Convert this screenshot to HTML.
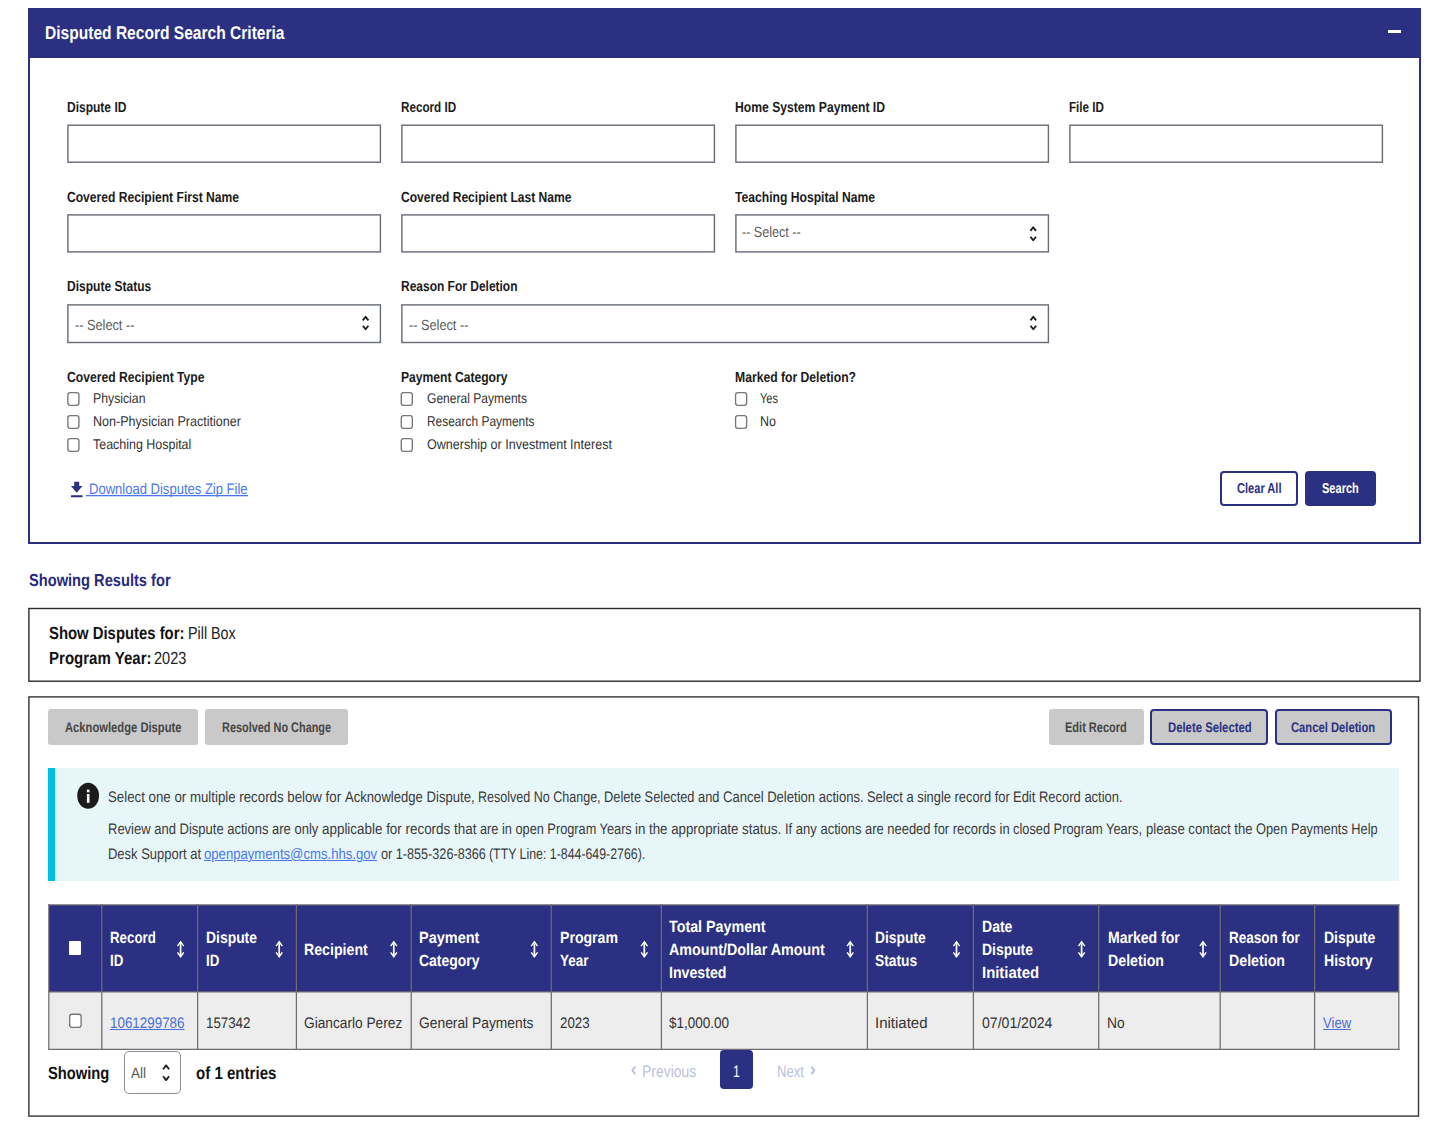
<!DOCTYPE html><html><head><meta charset="utf-8"><title>Disputed Record Search</title><style>
html,body{margin:0;padding:0;background:#fff}body{width:1449px;height:1131px;position:relative;overflow:hidden;font-family:"Liberation Sans", sans-serif}
#b div,#c div{position:absolute}
.t{position:absolute;white-space:nowrap;line-height:1;transform-origin:0 0;text-rendering:geometricPrecision}.t i{display:inline-block;width:0;height:0}
svg{position:absolute;left:0;top:0}
</style></head><body><div id="b">
<div style="left:28px;top:8px;width:1392.5px;height:535.5px;box-sizing:border-box;border:2px solid #2b3082;background:#fff"></div>
<div style="left:28px;top:8px;width:1392.5px;height:50px;background:#2b3082"></div>
<div style="left:1388.1px;top:29.9px;width:12.5px;height:3px;background:#fff"></div>
</div><svg width="1449" height="1131" viewBox="0 0 1449 1131">
<rect x="67.9" y="125.2" width="312.5" height="37" rx="0" fill="#fff" stroke="#656a73" stroke-width="1.4"/>
<rect x="401.9" y="125.2" width="312.5" height="37" rx="0" fill="#fff" stroke="#656a73" stroke-width="1.4"/>
<rect x="735.9" y="125.2" width="312.5" height="37" rx="0" fill="#fff" stroke="#656a73" stroke-width="1.4"/>
<rect x="1069.9" y="125.2" width="312.5" height="37" rx="0" fill="#fff" stroke="#656a73" stroke-width="1.4"/>
<rect x="67.9" y="214.9" width="312.5" height="37" rx="0" fill="#fff" stroke="#656a73" stroke-width="1.4"/>
<rect x="401.9" y="214.9" width="312.5" height="37" rx="0" fill="#fff" stroke="#656a73" stroke-width="1.4"/>
<rect x="735.9" y="214.9" width="312.5" height="37" rx="0" fill="#fff" stroke="#656a73" stroke-width="1.4"/>
<rect x="67.9" y="304.9" width="312.5" height="37.6" rx="0" fill="#fff" stroke="#656a73" stroke-width="1.4"/>
<rect x="401.9" y="304.9" width="646.5" height="37.6" rx="0" fill="#fff" stroke="#656a73" stroke-width="1.4"/>
<rect x="67.875" y="392.575" width="11.05" height="12.75" rx="2.3" fill="#fff" stroke="#777" stroke-width="1.35"/>
<rect x="67.875" y="415.575" width="11.05" height="12.75" rx="2.3" fill="#fff" stroke="#777" stroke-width="1.35"/>
<rect x="67.875" y="438.575" width="11.05" height="12.75" rx="2.3" fill="#fff" stroke="#777" stroke-width="1.35"/>
<rect x="401.275" y="392.575" width="11.05" height="12.75" rx="2.3" fill="#fff" stroke="#777" stroke-width="1.35"/>
<rect x="401.275" y="415.575" width="11.05" height="12.75" rx="2.3" fill="#fff" stroke="#777" stroke-width="1.35"/>
<rect x="401.275" y="438.575" width="11.05" height="12.75" rx="2.3" fill="#fff" stroke="#777" stroke-width="1.35"/>
<rect x="735.575" y="392.575" width="11.05" height="12.75" rx="2.3" fill="#fff" stroke="#777" stroke-width="1.35"/>
<rect x="735.575" y="415.575" width="11.05" height="12.75" rx="2.3" fill="#fff" stroke="#777" stroke-width="1.35"/>
<rect x="28.9" y="608.5" width="1391.1" height="72.7" rx="0" fill="#fff" stroke="#2a2a2a" stroke-width="1.4"/>
<rect x="28.9" y="696.9" width="1389.6" height="419.2" rx="0" fill="#fff" stroke="#333" stroke-width="1.4"/>
</svg><div id="c">
<div style="left:1220.4px;top:471px;width:77.8px;height:35.3px;box-sizing:border-box;border:2px solid #2b3082;border-radius:4px;background:#fff"></div>
<div style="left:1304.9px;top:471px;width:70.8px;height:35.3px;border-radius:4px;background:#2b3082"></div>
<div style="left:48.3px;top:708.8px;width:149.7px;height:36.2px;border-radius:3px;background:#c9c9c9"></div>
<div style="left:204.8px;top:708.8px;width:143px;height:36.2px;border-radius:3px;background:#c9c9c9"></div>
<div style="left:1048.8px;top:708.8px;width:95px;height:36.2px;border-radius:3px;background:#c9c9c9"></div>
<div style="left:1150.4px;top:708.8px;width:117.6px;height:36.2px;box-sizing:border-box;border:2px solid #2b3082;border-radius:4px;background:#c9c9c9"></div>
<div style="left:1274.6px;top:708.8px;width:117.6px;height:36.2px;box-sizing:border-box;border:2px solid #2b3082;border-radius:4px;background:#c9c9c9"></div>
<div style="left:48.3px;top:768px;width:1350.6px;height:113px;background:#e7f6f8"></div>
<div style="left:48.3px;top:768px;width:6.9px;height:113px;background:#00bde3"></div>
<div style="left:48.5px;top:904.8px;width:1350.3px;height:87px;background:#2b3082"></div>
<div style="left:48.5px;top:991.8px;width:1350.3px;height:57.7px;background:#ededed"></div>
<div style="left:69px;top:941px;width:12.4px;height:13.6px;background:#fff;border-radius:1px"></div>
<div style="left:124.3px;top:1050.7px;width:56.4px;height:43.3px;box-sizing:border-box;border:1px solid #8b9097;border-radius:5px;background:#fff"></div>
<div style="left:720.1px;top:1050px;width:33px;height:38.8px;border-radius:4px;background:#2b3082"></div>
</div><svg width="1449" height="1131" viewBox="0 0 1449 1131">
<line x1="48.2" y1="904.9" x2="1399.4" y2="904.9" stroke="#6c6c72" stroke-width="1.25"/>
<line x1="48.2" y1="991.9" x2="1399.4" y2="991.9" stroke="#6c6c72" stroke-width="1.25"/>
<line x1="48.2" y1="1049.3" x2="1399.4" y2="1049.3" stroke="#6c6c72" stroke-width="1.25"/>
<line x1="48.8" y1="904.3" x2="48.8" y2="1049.9" stroke="#6c6c72" stroke-width="1.25"/>
<line x1="101.8" y1="904.3" x2="101.8" y2="1049.9" stroke="#6c6c72" stroke-width="1.25"/>
<line x1="197.6" y1="904.3" x2="197.6" y2="1049.9" stroke="#6c6c72" stroke-width="1.25"/>
<line x1="296.4" y1="904.3" x2="296.4" y2="1049.9" stroke="#6c6c72" stroke-width="1.25"/>
<line x1="411.2" y1="904.3" x2="411.2" y2="1049.9" stroke="#6c6c72" stroke-width="1.25"/>
<line x1="551.3" y1="904.3" x2="551.3" y2="1049.9" stroke="#6c6c72" stroke-width="1.25"/>
<line x1="661.4" y1="904.3" x2="661.4" y2="1049.9" stroke="#6c6c72" stroke-width="1.25"/>
<line x1="867.4" y1="904.3" x2="867.4" y2="1049.9" stroke="#6c6c72" stroke-width="1.25"/>
<line x1="973.4" y1="904.3" x2="973.4" y2="1049.9" stroke="#6c6c72" stroke-width="1.25"/>
<line x1="1098.7" y1="904.3" x2="1098.7" y2="1049.9" stroke="#6c6c72" stroke-width="1.25"/>
<line x1="1220.2" y1="904.3" x2="1220.2" y2="1049.9" stroke="#6c6c72" stroke-width="1.25"/>
<line x1="1314.6" y1="904.3" x2="1314.6" y2="1049.9" stroke="#6c6c72" stroke-width="1.25"/>
<line x1="1398.8" y1="904.3" x2="1398.8" y2="1049.9" stroke="#6c6c72" stroke-width="1.25"/>
<rect x="69.675" y="1014.27" width="11.45" height="13.05" rx="2.3" fill="#fff" stroke="#777" stroke-width="1.35"/>
<path d="M1030.4 230.9 L1033.2 227.3 L1036 230.9 M1030.4 236.7 L1033.2 240.3 L1036 236.7" fill="none" stroke="#1b1b1b" stroke-width="1.8" stroke-linejoin="round"/>
<path d="M362.8 320.4 L365.6 316.8 L368.4 320.4 M362.8 325.7 L365.6 329.3 L368.4 325.7" fill="none" stroke="#1b1b1b" stroke-width="1.8" stroke-linejoin="round"/>
<path d="M1030.5 320.4 L1033.3 316.8 L1036.1 320.4 M1030.5 325.7 L1033.3 329.3 L1036.1 325.7" fill="none" stroke="#1b1b1b" stroke-width="1.8" stroke-linejoin="round"/>
<path d="M163.1 1069.2 L166.1 1065.4 L169.1 1069.2 M163.1 1076.3 L166.1 1080.1 L169.1 1076.3" fill="none" stroke="#1b1b1b" stroke-width="1.8" stroke-linejoin="round"/>
<path d="M74.2 481.8 h5 v4.3 h3.3 l-5.8 6.6 l-5.8 -6.6 h3.3z M71 495.2 h11.5 v2.1 h-11.5z" fill="#2b3082"/>
<rect x="86" y="495" width="162" height="1.3" fill="#4a77f0"/>
<ellipse cx="88.15" cy="795.8" rx="10.9" ry="13" fill="#1b1b1b"/>
<rect x="86.9" y="789.6" width="2.6" height="2.7" fill="#fff"/><rect x="86.9" y="794" width="2.6" height="8.8" fill="#fff"/>
<path d="M180.6 940.5 L184.3 945.7 L183.2 946.4 L180.6 943.1 L178 946.4 L176.9 945.7 Z M180.6 957.9 L184.3 952.7 L183.2 952 L180.6 955.3 L178 952 L176.9 952.7 Z" fill="#fff"/><rect x="179.75" y="942" width="1.7" height="14.4" fill="#fff"/>
<path d="M279.2 940.5 L282.9 945.7 L281.8 946.4 L279.2 943.1 L276.6 946.4 L275.5 945.7 Z M279.2 957.9 L282.9 952.7 L281.8 952 L279.2 955.3 L276.6 952 L275.5 952.7 Z" fill="#fff"/><rect x="278.35" y="942" width="1.7" height="14.4" fill="#fff"/>
<path d="M393.8 940.5 L397.5 945.7 L396.4 946.4 L393.8 943.1 L391.2 946.4 L390.1 945.7 Z M393.8 957.9 L397.5 952.7 L396.4 952 L393.8 955.3 L391.2 952 L390.1 952.7 Z" fill="#fff"/><rect x="392.95" y="942" width="1.7" height="14.4" fill="#fff"/>
<path d="M534.4 940.5 L538.1 945.7 L537 946.4 L534.4 943.1 L531.8 946.4 L530.7 945.7 Z M534.4 957.9 L538.1 952.7 L537 952 L534.4 955.3 L531.8 952 L530.7 952.7 Z" fill="#fff"/><rect x="533.55" y="942" width="1.7" height="14.4" fill="#fff"/>
<path d="M644.3 940.5 L648 945.7 L646.9 946.4 L644.3 943.1 L641.7 946.4 L640.6 945.7 Z M644.3 957.9 L648 952.7 L646.9 952 L644.3 955.3 L641.7 952 L640.6 952.7 Z" fill="#fff"/><rect x="643.45" y="942" width="1.7" height="14.4" fill="#fff"/>
<path d="M850.2 940.5 L853.9 945.7 L852.8 946.4 L850.2 943.1 L847.6 946.4 L846.5 945.7 Z M850.2 957.9 L853.9 952.7 L852.8 952 L850.2 955.3 L847.6 952 L846.5 952.7 Z" fill="#fff"/><rect x="849.35" y="942" width="1.7" height="14.4" fill="#fff"/>
<path d="M956.5 940.5 L960.2 945.7 L959.1 946.4 L956.5 943.1 L953.9 946.4 L952.8 945.7 Z M956.5 957.9 L960.2 952.7 L959.1 952 L956.5 955.3 L953.9 952 L952.8 952.7 Z" fill="#fff"/><rect x="955.65" y="942" width="1.7" height="14.4" fill="#fff"/>
<path d="M1081.6 940.5 L1085.3 945.7 L1084.2 946.4 L1081.6 943.1 L1079 946.4 L1077.9 945.7 Z M1081.6 957.9 L1085.3 952.7 L1084.2 952 L1081.6 955.3 L1079 952 L1077.9 952.7 Z" fill="#fff"/><rect x="1080.75" y="942" width="1.7" height="14.4" fill="#fff"/>
<path d="M1203 940.5 L1206.7 945.7 L1205.6 946.4 L1203 943.1 L1200.4 946.4 L1199.3 945.7 Z M1203 957.9 L1206.7 952.7 L1205.6 952 L1203 955.3 L1200.4 952 L1199.3 952.7 Z" fill="#fff"/><rect x="1202.15" y="942" width="1.7" height="14.4" fill="#fff"/>
<path d="M635.3 1066.5 L632.3 1070.3 L635.3 1074.1" fill="none" stroke="#bcbfdd" stroke-width="1.9"/>
<path d="M811.3 1066.5 L814.3 1070.3 L811.3 1074.1" fill="none" stroke="#bcbfdd" stroke-width="1.9"/>
</svg>
<span class="t" style="left:44.70px;top:23.60px;font-size:18.4px;font-weight:700;color:#fff;transform:scaleX(0.8460);">Disputed Record Search Criteria</span>
<span class="t" style="left:67.20px;top:101.30px;font-size:14.6px;font-weight:700;color:#1b1b1b;transform:scaleX(0.8230);">Dispute ID</span>
<span class="t" style="left:401.00px;top:101.30px;font-size:14.6px;font-weight:700;color:#1b1b1b;transform:scaleX(0.8007);">Record ID</span>
<span class="t" style="left:735.00px;top:101.30px;font-size:14.6px;font-weight:700;color:#1b1b1b;transform:scaleX(0.8330);">Home System Payment ID</span>
<span class="t" style="left:1069.00px;top:101.30px;font-size:14.6px;font-weight:700;color:#1b1b1b;transform:scaleX(0.7991);">File ID</span>
<span class="t" style="left:67.20px;top:191.30px;font-size:14.6px;font-weight:700;color:#1b1b1b;transform:scaleX(0.8284);">Covered Recipient First Name</span>
<span class="t" style="left:401.00px;top:191.30px;font-size:14.6px;font-weight:700;color:#1b1b1b;transform:scaleX(0.8276);">Covered Recipient Last Name</span>
<span class="t" style="left:735.00px;top:191.30px;font-size:14.6px;font-weight:700;color:#1b1b1b;transform:scaleX(0.8313);">Teaching Hospital Name</span>
<span class="t" style="left:67.20px;top:280.30px;font-size:14.6px;font-weight:700;color:#1b1b1b;transform:scaleX(0.8241);">Dispute Status</span>
<span class="t" style="left:401.00px;top:280.30px;font-size:14.6px;font-weight:700;color:#1b1b1b;transform:scaleX(0.8210);">Reason For Deletion</span>
<span class="t" style="left:67.20px;top:371.10px;font-size:14.6px;font-weight:700;color:#1b1b1b;transform:scaleX(0.8325);">Covered Recipient Type</span>
<span class="t" style="left:401.00px;top:371.10px;font-size:14.6px;font-weight:700;color:#1b1b1b;transform:scaleX(0.8310);">Payment Category</span>
<span class="t" style="left:735.00px;top:371.10px;font-size:14.6px;font-weight:700;color:#1b1b1b;transform:scaleX(0.8336);">Marked for Deletion?</span>
<span class="t" style="left:742.30px;top:225.90px;font-size:14.8px;font-weight:400;color:#5c5c5c;transform:scaleX(0.8485);">-- Select --</span>
<span class="t" style="left:74.50px;top:319.20px;font-size:14.8px;font-weight:400;color:#5c5c5c;transform:scaleX(0.8601);">-- Select --</span>
<span class="t" style="left:408.50px;top:319.20px;font-size:14.8px;font-weight:400;color:#5c5c5c;transform:scaleX(0.8601);">-- Select --</span>
<span class="t" style="left:93.00px;top:390.90px;font-size:14.1px;font-weight:400;color:#333;transform:scaleX(0.8702);">Physician</span>
<span class="t" style="left:93.00px;top:413.90px;font-size:14.1px;font-weight:400;color:#333;transform:scaleX(0.8911);">Non-Physician Practitioner</span>
<span class="t" style="left:93.00px;top:436.90px;font-size:14.1px;font-weight:400;color:#333;transform:scaleX(0.8836);">Teaching Hospital</span>
<span class="t" style="left:426.50px;top:390.90px;font-size:14.1px;font-weight:400;color:#333;transform:scaleX(0.8566);">General Payments</span>
<span class="t" style="left:426.50px;top:413.90px;font-size:14.1px;font-weight:400;color:#333;transform:scaleX(0.8471);">Research Payments</span>
<span class="t" style="left:426.50px;top:436.90px;font-size:14.1px;font-weight:400;color:#333;transform:scaleX(0.8912);">Ownership or Investment Interest</span>
<span class="t" style="left:760.00px;top:390.90px;font-size:14.1px;font-weight:400;color:#333;transform:scaleX(0.7826);">Yes</span>
<span class="t" style="left:760.00px;top:413.90px;font-size:14.1px;font-weight:400;color:#333;transform:scaleX(0.8873);">No</span>
<span class="t" style="left:89.40px;top:482.20px;font-size:15.3px;font-weight:400;color:#4a77f0;transform:scaleX(0.8518);">Download Disputes Zip File</span>
<span class="t" style="left:1237.00px;top:482.40px;font-size:14.4px;font-weight:700;color:#2b3082;transform:scaleX(0.7691);">Clear All</span>
<span class="t" style="left:1321.90px;top:482.40px;font-size:14.4px;font-weight:700;color:#fff;transform:scaleX(0.7667);">Search</span>
<span class="t" style="left:29.00px;top:572.20px;font-size:17.4px;font-weight:700;color:#252a80;transform:scaleX(0.8422);">Showing Results for</span>
<span class="t" style="left:48.50px;top:625.20px;font-size:17.6px;font-weight:700;color:#111;transform:scaleX(0.8446);">Show Disputes for:</span>
<span class="t" style="left:188.30px;top:625.20px;font-size:17.6px;font-weight:400;color:#222;transform:scaleX(0.8130);">Pill Box</span>
<span class="t" style="left:48.50px;top:650.30px;font-size:17.6px;font-weight:700;color:#111;transform:scaleX(0.8544);">Program Year:</span>
<span class="t" style="left:154.00px;top:650.30px;font-size:17.6px;font-weight:400;color:#222;transform:scaleX(0.8252);">2023</span>
<span class="t" style="left:64.90px;top:720.00px;font-size:14px;font-weight:700;color:#454545;transform:scaleX(0.8009);">Acknowledge Dispute</span>
<span class="t" style="left:222.20px;top:720.00px;font-size:14px;font-weight:700;color:#454545;transform:scaleX(0.7791);">Resolved No Change</span>
<span class="t" style="left:1065.40px;top:720.00px;font-size:14px;font-weight:700;color:#454545;transform:scaleX(0.7865);">Edit Record</span>
<span class="t" style="left:1167.50px;top:720.00px;font-size:14px;font-weight:700;color:#2b3082;transform:scaleX(0.8087);">Delete Selected</span>
<span class="t" style="left:1291.20px;top:720.00px;font-size:14px;font-weight:700;color:#2b3082;transform:scaleX(0.8017);">Cancel Deletion</span>
<span class="t" style="left:107.70px;top:789.80px;font-size:15.3px;font-weight:400;color:#3a3a3a;transform:scaleX(0.8676);white-space:pre;">Select one or multiple records below for </span>
<span class="t" style="left:344.50px;top:789.80px;font-size:15.3px;font-weight:400;color:#3a3a3a;transform:scaleX(0.8560);white-space:pre;">Acknowledge Dispute, </span>
<span class="t" style="left:477.70px;top:789.80px;font-size:15.3px;font-weight:400;color:#3a3a3a;transform:scaleX(0.8192);white-space:pre;">Resolved No Change, </span>
<span class="t" style="left:603.80px;top:789.80px;font-size:15.3px;font-weight:400;color:#3a3a3a;transform:scaleX(0.8378);white-space:pre;">Delete Selected and </span>
<span class="t" style="left:722.80px;top:789.80px;font-size:15.3px;font-weight:400;color:#3a3a3a;transform:scaleX(0.8522);white-space:pre;">Cancel Deletion actions. </span>
<span class="t" style="left:867.00px;top:789.80px;font-size:15.3px;font-weight:400;color:#3a3a3a;transform:scaleX(0.8435);white-space:pre;">Select a single record for </span>
<span class="t" style="left:1013.30px;top:789.80px;font-size:15.3px;font-weight:400;color:#3a3a3a;transform:scaleX(0.8480);white-space:pre;">Edit Record action.</span>
<span class="t" style="left:107.70px;top:821.60px;font-size:15.3px;font-weight:400;color:#3a3a3a;transform:scaleX(0.8499);white-space:pre;">Review and Dispute actions are only </span>
<span class="t" style="left:321.60px;top:821.60px;font-size:15.3px;font-weight:400;color:#3a3a3a;transform:scaleX(0.8770);white-space:pre;">applicable for records that </span>
<span class="t" style="left:479.70px;top:821.60px;font-size:15.3px;font-weight:400;color:#3a3a3a;transform:scaleX(0.8339);white-space:pre;">are in open Program Years </span>
<span class="t" style="left:635.00px;top:821.60px;font-size:15.3px;font-weight:400;color:#3a3a3a;transform:scaleX(0.8684);white-space:pre;">in the appropriate status. </span>
<span class="t" style="left:784.90px;top:821.60px;font-size:15.3px;font-weight:400;color:#3a3a3a;transform:scaleX(0.8497);white-space:pre;">If any actions </span>
<span class="t" style="left:865.10px;top:821.60px;font-size:15.3px;font-weight:400;color:#3a3a3a;transform:scaleX(0.8460);white-space:pre;">are needed for records in </span>
<span class="t" style="left:1013.30px;top:821.60px;font-size:15.3px;font-weight:400;color:#3a3a3a;transform:scaleX(0.8378);white-space:pre;">closed Program Years, </span>
<span class="t" style="left:1145.80px;top:821.60px;font-size:15.3px;font-weight:400;color:#3a3a3a;transform:scaleX(0.8581);white-space:pre;">please contact the </span>
<span class="t" style="left:1256.00px;top:821.60px;font-size:15.3px;font-weight:400;color:#3a3a3a;transform:scaleX(0.8370);white-space:pre;">Open Payments Help</span>
<span class="t" style="left:107.70px;top:847.00px;font-size:15.3px;font-weight:400;color:#3a3a3a;transform:scaleX(0.8478);white-space:pre;">Desk Support at </span>
<span class="t" style="left:204.30px;top:847.00px;font-size:15.3px;font-weight:400;color:#4a77f0;transform:scaleX(0.8580);white-space:pre;text-decoration:underline;">openpayments@cms.hhs.gov</span>
<span class="t" style="left:381.00px;top:847.00px;font-size:15.3px;font-weight:400;color:#3a3a3a;transform:scaleX(0.8269);white-space:pre;">or 1-855-326-8366 </span>
<span class="t" style="left:489.30px;top:847.00px;font-size:15.3px;font-weight:400;color:#3a3a3a;transform:scaleX(0.8068);white-space:pre;">(TTY Line: 1-844-649-2766).</span>
<span class="t" style="left:110.40px;top:929.80px;font-size:16.3px;font-weight:700;color:#fff;transform:scaleX(0.8163);">Record</span>
<span class="t" style="left:110.40px;top:953.20px;font-size:16.3px;font-weight:700;color:#fff;transform:scaleX(0.8169);">ID</span>
<span class="t" style="left:206.00px;top:929.80px;font-size:16.3px;font-weight:700;color:#fff;transform:scaleX(0.8540);">Dispute</span>
<span class="t" style="left:206.00px;top:953.20px;font-size:16.3px;font-weight:700;color:#fff;transform:scaleX(0.8169);">ID</span>
<span class="t" style="left:304.00px;top:942.10px;font-size:16.3px;font-weight:700;color:#fff;transform:scaleX(0.8704);">Recipient</span>
<span class="t" style="left:419.00px;top:929.80px;font-size:16.3px;font-weight:700;color:#fff;transform:scaleX(0.8899);">Payment</span>
<span class="t" style="left:419.00px;top:953.20px;font-size:16.3px;font-weight:700;color:#fff;transform:scaleX(0.8558);">Category</span>
<span class="t" style="left:560.30px;top:929.80px;font-size:16.3px;font-weight:700;color:#fff;transform:scaleX(0.8661);">Program</span>
<span class="t" style="left:560.30px;top:953.20px;font-size:16.3px;font-weight:700;color:#fff;transform:scaleX(0.8251);">Year</span>
<span class="t" style="left:669.40px;top:919.00px;font-size:16.3px;font-weight:700;color:#fff;transform:scaleX(0.8776);">Total Payment</span>
<span class="t" style="left:669.40px;top:941.90px;font-size:16.3px;font-weight:700;color:#fff;transform:scaleX(0.8768);">Amount/Dollar Amount</span>
<span class="t" style="left:669.40px;top:965.30px;font-size:16.3px;font-weight:700;color:#fff;transform:scaleX(0.8689);">Invested</span>
<span class="t" style="left:875.30px;top:929.80px;font-size:16.3px;font-weight:700;color:#fff;transform:scaleX(0.8507);">Dispute</span>
<span class="t" style="left:875.30px;top:953.20px;font-size:16.3px;font-weight:700;color:#fff;transform:scaleX(0.8480);">Status</span>
<span class="t" style="left:981.90px;top:919.00px;font-size:16.3px;font-weight:700;color:#fff;transform:scaleX(0.8613);">Date</span>
<span class="t" style="left:981.90px;top:941.90px;font-size:16.3px;font-weight:700;color:#fff;transform:scaleX(0.8540);">Dispute</span>
<span class="t" style="left:981.90px;top:965.30px;font-size:16.3px;font-weight:700;color:#fff;transform:scaleX(0.9147);">Initiated</span>
<span class="t" style="left:1107.70px;top:929.80px;font-size:16.3px;font-weight:700;color:#fff;transform:scaleX(0.8625);">Marked for</span>
<span class="t" style="left:1107.70px;top:953.20px;font-size:16.3px;font-weight:700;color:#fff;transform:scaleX(0.8718);">Deletion</span>
<span class="t" style="left:1228.60px;top:929.80px;font-size:16.3px;font-weight:700;color:#fff;transform:scaleX(0.8313);">Reason for</span>
<span class="t" style="left:1228.60px;top:953.20px;font-size:16.3px;font-weight:700;color:#fff;transform:scaleX(0.8718);">Deletion</span>
<span class="t" style="left:1323.60px;top:929.80px;font-size:16.3px;font-weight:700;color:#fff;transform:scaleX(0.8590);">Dispute</span>
<span class="t" style="left:1323.60px;top:953.20px;font-size:16.3px;font-weight:700;color:#fff;transform:scaleX(0.8662);">History</span>
<span class="t" style="left:110.20px;top:1016.20px;font-size:15.3px;font-weight:400;color:#4a6fd6;transform:scaleX(0.8757);text-decoration:underline">1061299786</span>
<span class="t" style="left:205.80px;top:1016.20px;font-size:15.3px;font-weight:400;color:#333;transform:scaleX(0.8698);">157342</span>
<span class="t" style="left:303.80px;top:1016.20px;font-size:15.3px;font-weight:400;color:#333;transform:scaleX(0.8962);">Giancarlo Perez</span>
<span class="t" style="left:418.80px;top:1016.20px;font-size:15.3px;font-weight:400;color:#333;transform:scaleX(0.9038);">General Payments</span>
<span class="t" style="left:560.10px;top:1016.20px;font-size:15.3px;font-weight:400;color:#333;transform:scaleX(0.8698);">2023</span>
<span class="t" style="left:669.20px;top:1016.20px;font-size:15.3px;font-weight:400;color:#333;transform:scaleX(0.8830);">$1,000.00</span>
<span class="t" style="left:875.10px;top:1016.20px;font-size:15.3px;font-weight:400;color:#333;transform:scaleX(0.9799);">Initiated</span>
<span class="t" style="left:981.70px;top:1016.20px;font-size:15.3px;font-weight:400;color:#333;transform:scaleX(0.9195);">07/01/2024</span>
<span class="t" style="left:1107.30px;top:1016.20px;font-size:15.3px;font-weight:400;color:#333;transform:scaleX(0.9048);">No</span>
<span class="t" style="left:1323.40px;top:1016.20px;font-size:15.3px;font-weight:400;color:#4a6fd6;transform:scaleX(0.8543);text-decoration:underline">View</span>
<span class="t" style="left:48.40px;top:1065.20px;font-size:17.7px;font-weight:700;color:#111;transform:scaleX(0.8319);">Showing</span>
<span class="t" style="left:195.80px;top:1065.20px;font-size:17.7px;font-weight:700;color:#111;transform:scaleX(0.8519);">of 1 entries</span>
<span class="t" style="left:131.20px;top:1065.80px;font-size:15px;font-weight:400;color:#555;transform:scaleX(0.8997);">All</span>
<span class="t" style="left:642.30px;top:1064.40px;font-size:16.8px;font-weight:400;color:#bcbfdd;transform:scaleX(0.8316);">Previous</span>
<span class="t" style="left:777.30px;top:1064.40px;font-size:16.8px;font-weight:400;color:#bcbfdd;transform:scaleX(0.7823);">Next</span>
<span class="t" style="left:733.20px;top:1064.20px;font-size:16.6px;font-weight:400;color:#fff;transform:scaleX(0.7364);">1</span>
</body></html>
